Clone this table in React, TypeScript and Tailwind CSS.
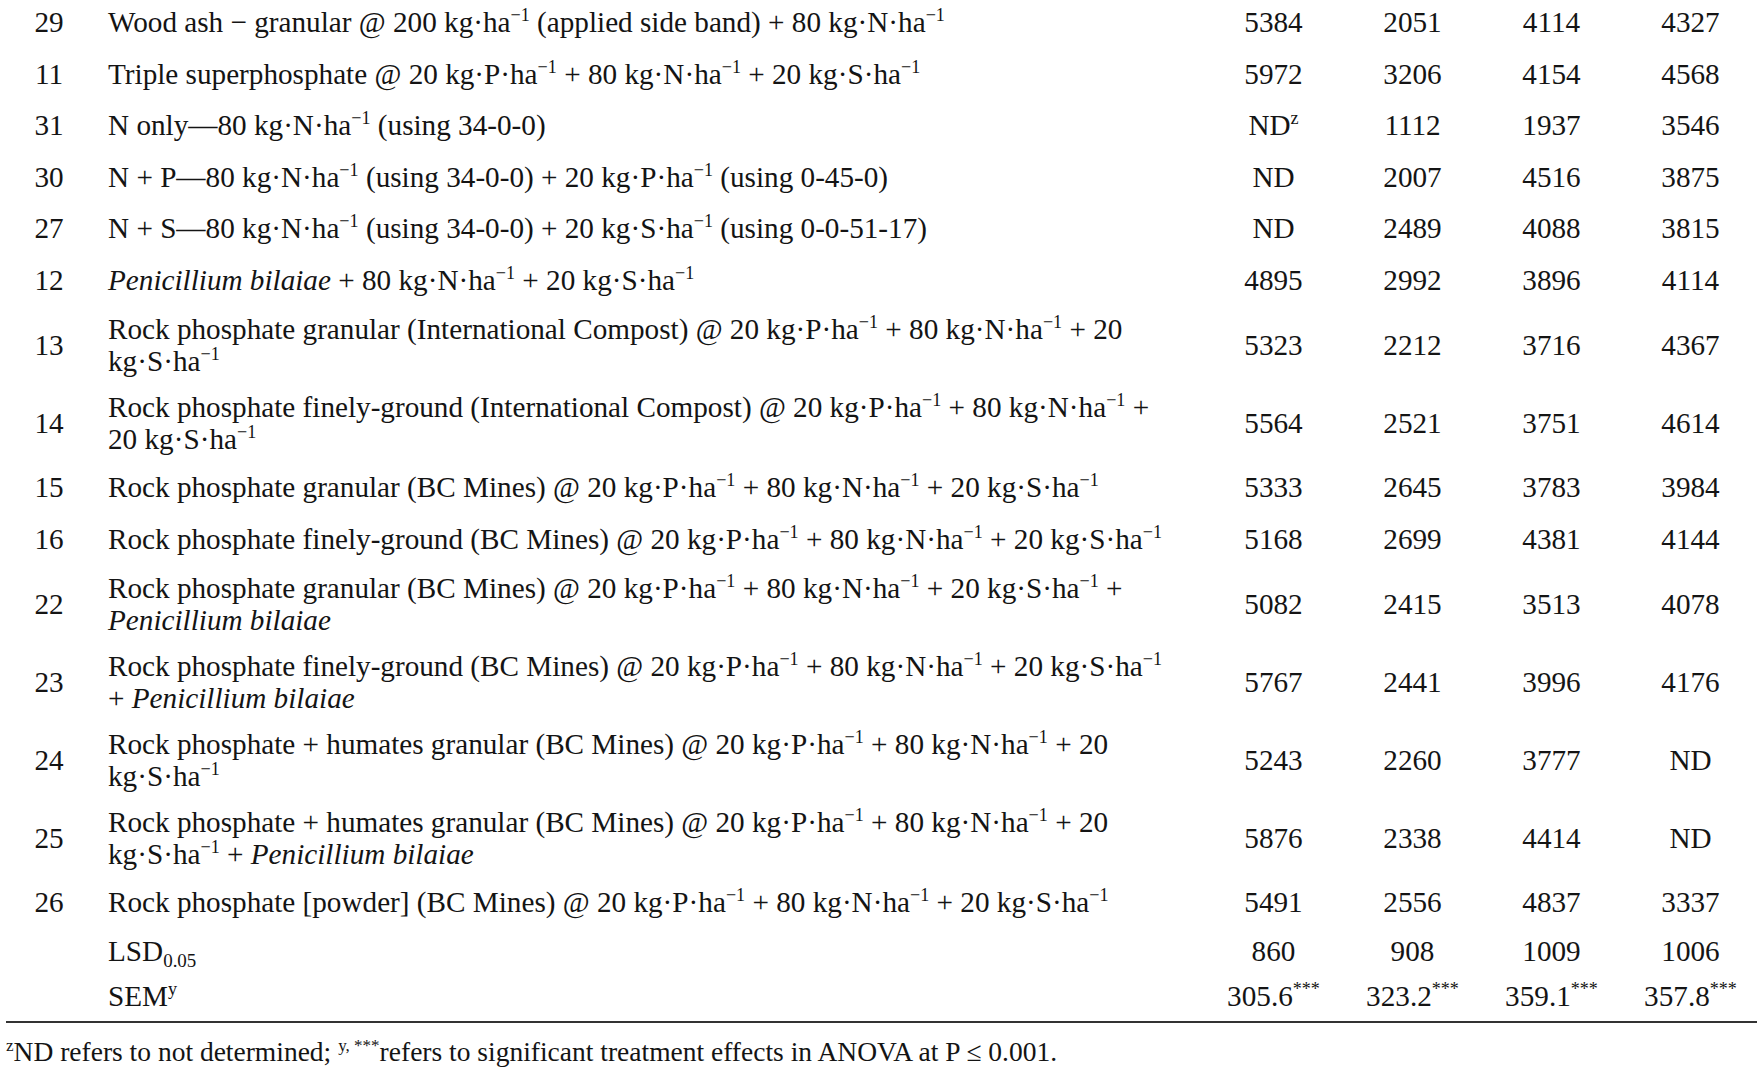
import React from 'react';

const Sup = ({ children }: { children: React.ReactNode }) => (
  <sup className="top-[-0.6em] text-[0.62em]">{children}</sup>
);

const ha = (
  <>
    ha<Sup>−1</Sup>
  </>
);
const kg = (el: string) => (
  <>
    kg·{el}·{ha}
  </>
);
const Pb = <i>Penicillium bilaiae</i>;

type Row = {
  id: string;
  h: string;
  lines: React.ReactNode[];
  vals: React.ReactNode[];
};

const rows: Row[] = [
  {
    id: '29',
    h: 'h-[48px] pb-[5px]',
    lines: [<>Wood ash − granular @ 200 kg·{ha} (applied side band) + 80 {kg('N')}</>],
    vals: ['5384', '2051', '4114', '4327'],
  },
  {
    id: '11',
    h: 'h-[51.5px]',
    lines: [<>Triple superphosphate @ 20 {kg('P')} + 80 {kg('N')} + 20 {kg('S')}</>],
    vals: ['5972', '3206', '4154', '4568'],
  },
  {
    id: '31',
    h: 'h-[51.5px]',
    lines: [<>N only—80 {kg('N')} (using 34-0-0)</>],
    vals: [<>ND<Sup>z</Sup></>, '1112', '1937', '3546'],
  },
  {
    id: '30',
    h: 'h-[51.5px]',
    lines: [<>N + P—80 {kg('N')} (using 34-0-0) + 20 {kg('P')} (using 0-45-0)</>],
    vals: ['ND', '2007', '4516', '3875'],
  },
  {
    id: '27',
    h: 'h-[51.5px]',
    lines: [<>N + S—80 {kg('N')} (using 34-0-0) + 20 {kg('S')} (using 0-0-51-17)</>],
    vals: ['ND', '2489', '4088', '3815'],
  },
  {
    id: '12',
    h: 'h-[51.5px]',
    lines: [<>{Pb} + 80 {kg('N')} + 20 {kg('S')}</>],
    vals: ['4895', '2992', '3896', '4114'],
  },
  {
    id: '13',
    h: 'h-[78px]',
    lines: [
      <>Rock phosphate granular (International Compost) @ 20 {kg('P')} + 80 {kg('N')} + 20</>,
      <>{kg('S')}</>,
    ],
    vals: ['5323', '2212', '3716', '4367'],
  },
  {
    id: '14',
    h: 'h-[78px]',
    lines: [
      <>Rock phosphate finely-ground (International Compost) @ 20 {kg('P')} + 80 {kg('N')} +</>,
      <>20 {kg('S')}</>,
    ],
    vals: ['5564', '2521', '3751', '4614'],
  },
  {
    id: '15',
    h: 'h-[51.5px]',
    lines: [<>Rock phosphate granular (BC Mines) @ 20 {kg('P')} + 80 {kg('N')} + 20 {kg('S')}</>],
    vals: ['5333', '2645', '3783', '3984'],
  },
  {
    id: '16',
    h: 'h-[51.5px]',
    lines: [<>Rock phosphate finely-ground (BC Mines) @ 20 {kg('P')} + 80 {kg('N')} + 20 {kg('S')}</>],
    vals: ['5168', '2699', '4381', '4144'],
  },
  {
    id: '22',
    h: 'h-[78px]',
    lines: [
      <>Rock phosphate granular (BC Mines) @ 20 {kg('P')} + 80 {kg('N')} + 20 {kg('S')} +</>,
      Pb,
    ],
    vals: ['5082', '2415', '3513', '4078'],
  },
  {
    id: '23',
    h: 'h-[78px]',
    lines: [
      <>Rock phosphate finely-ground (BC Mines) @ 20 {kg('P')} + 80 {kg('N')} + 20 {kg('S')}</>,
      <>+ {Pb}</>,
    ],
    vals: ['5767', '2441', '3996', '4176'],
  },
  {
    id: '24',
    h: 'h-[78px]',
    lines: [
      <>Rock phosphate + humates granular (BC Mines) @ 20 {kg('P')} + 80 {kg('N')} + 20</>,
      <>{kg('S')}</>,
    ],
    vals: ['5243', '2260', '3777', 'ND'],
  },
  {
    id: '25',
    h: 'h-[78px]',
    lines: [
      <>Rock phosphate + humates granular (BC Mines) @ 20 {kg('P')} + 80 {kg('N')} + 20</>,
      <>{kg('S')} + {Pb}</>,
    ],
    vals: ['5876', '2338', '4414', 'ND'],
  },
  {
    id: '26',
    h: 'h-[51.5px]',
    lines: [<>Rock phosphate [powder] (BC Mines) @ 20 {kg('P')} + 80 {kg('N')} + 20 {kg('S')}</>],
    vals: ['5491', '2556', '4837', '3337'],
  },
  {
    id: '',
    h: 'h-[46.5px]',
    lines: [
      <>
        LSD<sub className="bottom-[-0.3em] text-[0.65em]">0.05</sub>
      </>,
    ],
    vals: ['860', '908', '1009', '1006'],
  },
  {
    id: '',
    h: 'h-[43.5px]',
    lines: [
      <>
        SEM<Sup>y</Sup>
      </>,
    ],
    vals: [
      <>305.6<Sup>***</Sup></>,
      <>323.2<Sup>***</Sup></>,
      <>359.1<Sup>***</Sup></>,
      <>357.8<Sup>***</Sup></>,
    ],
  },
];

export default function App() {
  return (
    <div className="w-[1757px] h-[1076px] overflow-hidden bg-white text-[#141414] font-['Liberation_Serif','Times_New_Roman',serif]">
      <div className="w-[1760px] text-[29.2px] leading-[32px]">
        {rows.map((r, i) => (
          <div key={i} className={`flex items-center ${r.h}`}>
            <div className="w-[98px] shrink-0 text-center">{r.id}</div>
            <div className="w-[1106px] shrink-0 pl-[10px] whitespace-nowrap">
              {r.lines.map((l, j) => (
                <div key={j}>{l}</div>
              ))}
            </div>
            {r.vals.map((v, j) => (
              <div key={j} className="w-[139px] shrink-0 text-center whitespace-nowrap">
                {v}
              </div>
            ))}
          </div>
        ))}
      </div>
      <div className="ml-[6px] mt-[3px] h-[2px] bg-[#333]" />
      <p className="ml-[6px] mt-[14px] text-[27.5px] leading-[30px] whitespace-nowrap">
        <Sup>z</Sup>ND refers to not determined; <Sup>y, ***</Sup>refers to significant treatment effects in
        ANOVA at P ≤ 0.001.
      </p>
    </div>
  );
}
